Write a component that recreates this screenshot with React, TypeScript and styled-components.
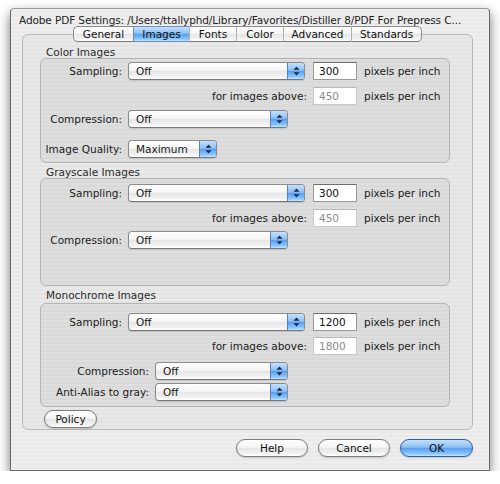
import styled, { createGlobalStyle, css } from "styled-components"

const GlobalStyle = createGlobalStyle`
  html, body {
    margin: 0;
    padding: 0;
    background: #ffffff;
  }
  body {
    font-family: "DejaVu Sans", "Liberation Sans", sans-serif;
    font-size: 10.5px;
    color: #1a1a1a;
  }
`

const pinstripe = css`
  background: repeating-linear-gradient(
    to bottom,
    #efefef 0px,
    #efefef 2px,
    #e9e9e9 2px,
    #e9e9e9 4px
  );
`

const glossWhite = css`
  background: linear-gradient(
    to bottom,
    #ffffff 0%,
    #f6f6f6 45%,
    #e6e6e6 52%,
    #f0f0f0 80%,
    #ffffff 100%
  );
`

const glossBlue = css`
  background: linear-gradient(
    to bottom,
    #c4e1ff 0%,
    #8cc0f5 45%,
    #5a9fec 52%,
    #86c5ff 85%,
    #c2e6ff 100%
  );
`

export const Window = styled.div`
  box-sizing: border-box;
  width: 480px;
  height: 463px;
  margin: 8px 0 0 10px;
  border: 1px solid #6a6a6a;
  border-top-color: #9a9a9a;
  border-radius: 4px 4px 0 0;
  box-shadow: 0 5px 12px rgba(0, 0, 0, 0.55);
  ${pinstripe}
  display: flex;
  flex-direction: column;
`

export const TitleBar = styled.div`
  height: 17px;
  padding: 0 8px;
  display: flex;
  align-items: flex-end;
  font-size: 10.5px;
  color: #222;
  white-space: nowrap;
  overflow: hidden;
  letter-spacing: -0.1px;
`

export const TabStrip = styled.div`
  position: relative;
  z-index: 1;
  display: flex;
  justify-content: center;
  margin: 0 0 -8px 11px;
  width: 451px;
`

export const Tab = styled.div<{ $w: number; $active?: boolean; $first?: boolean; $last?: boolean }>`
  box-sizing: border-box;
  width: ${(p) => p.$w}px;
  height: 16px;
  display: flex;
  align-items: center;
  justify-content: center;
  border-top: 1px solid #8a8a8a;
  border-bottom: 1px solid #7a7a7a;
  border-left: 1px solid ${(p) => (p.$first ? "#8a8a8a" : "#b0b0b0")};
  ${(p) => p.$last && "border-right: 1px solid #8a8a8a;"}
  border-radius: ${(p) => (p.$first ? "5px 0 0 5px" : p.$last ? "0 5px 5px 0" : "0")};
  ${(p) => (p.$active ? glossBlue : glossWhite)}
  ${(p) => p.$active && "border-color: #6c8fbf;"}
  color: #111;
`

export const Panel = styled.div`
  box-sizing: border-box;
  width: 451px;
  height: 396px;
  margin-left: 11px;
  padding-top: 11px;
  border: 1px solid #b9b9b9;
  border-radius: 6px;
  background: repeating-linear-gradient(
    to bottom,
    #e9e9e9 0px,
    #e9e9e9 2px,
    #e3e3e3 2px,
    #e3e3e3 4px
  );
  display: flex;
  flex-direction: column;
`

export const GroupLabel = styled.div<{ $mt?: number }>`
  height: 12px;
  line-height: 12px;
  margin: ${(p) => p.$mt ?? 0}px 0 0 23px;
  color: #2a2a2a;
`

export const GroupBox = styled.div<{ $h: number; $mt?: number }>`
  box-sizing: border-box;
  width: 410px;
  height: ${(p) => p.$h}px;
  margin: ${(p) => p.$mt ?? 0}px 0 0 17px;
  border: 1px solid #b4b4b4;
  border-radius: 6px;
  background: repeating-linear-gradient(
    to bottom,
    #dedede 0px,
    #dedede 2px,
    #d9d9d9 2px,
    #d9d9d9 4px
  );
  display: flex;
  flex-direction: column;
`

export const Row = styled.div<{ $mt: number }>`
  display: flex;
  align-items: center;
  height: 18px;
  margin-top: ${(p) => p.$mt}px;
`

export const Label = styled.div<{ $w: number }>`
  width: ${(p) => p.$w}px;
  margin-right: 6px;
  text-align: right;
  white-space: nowrap;
`

export const Popup = styled.div<{ $w: number }>`
  box-sizing: border-box;
  width: ${(p) => p.$w}px;
  height: 18px;
  display: flex;
  align-items: stretch;
  border: 1px solid #8b8b8b;
  border-bottom-color: #777;
  border-radius: 4px;
  ${glossWhite}
  overflow: hidden;
  box-shadow: 0 1px 1px rgba(0, 0, 0, 0.12);
`

export const PopupText = styled.div`
  flex: 1;
  display: flex;
  align-items: center;
  padding-left: 7px;
`

export const PopupArrows = styled.div`
  width: 16px;
  border-left: 1px solid #5b80b5;
  ${glossBlue}
  display: flex;
  align-items: center;
  justify-content: center;
`

export const Field = styled.div<{ $disabled?: boolean }>`
  box-sizing: border-box;
  width: 44px;
  height: 18px;
  margin-left: 8px;
  padding-left: 5px;
  display: flex;
  align-items: center;
  background: #fff;
  border: 1px solid ${(p) => (p.$disabled ? "#c8c8c8" : "#9a9a9a")};
  border-top-color: ${(p) => (p.$disabled ? "#b8b8b8" : "#6e6e6e")};
  color: ${(p) => (p.$disabled ? "#8a8a8a" : "#111")};
`

export const FieldFromLabel = styled(Field)`
  margin-left: 0;
`

export const Unit = styled.div`
  margin-left: 7px;
  white-space: nowrap;
`

export const PushButton = styled.div<{ $w: number; $default?: boolean }>`
  box-sizing: border-box;
  width: ${(p) => p.$w}px;
  height: 18px;
  border-radius: 9px;
  display: flex;
  align-items: center;
  justify-content: center;
  border: 1px solid ${(p) => (p.$default ? "#2f5e9e" : "#7d7d7d")};
  ${(p) => (p.$default ? glossBlue : glossWhite)}
  box-shadow: 0 1px 2px rgba(0, 0, 0, 0.2);
  color: #111;
`

export const PolicyButton = styled(PushButton)`
  margin: 3px 0 0 21px;
`

export const ButtonBar = styled.div`
  display: flex;
  justify-content: flex-end;
  gap: 10px;
  margin-top: 9px;
  padding-right: 16px;
`

function Arrows() {
  return (
    <svg width="7" height="10" viewBox="0 0 7 10">
      <path d="M3.5 0.5 L6.5 3.8 L0.5 3.8 Z" fill="#1b2a48" />
      <path d="M3.5 9.5 L6.5 6.2 L0.5 6.2 Z" fill="#1b2a48" />
    </svg>
  )
}

function PopupButton({ w, value }: { w: number; value: string }) {
  return (
    <Popup $w={w}>
      <PopupText>{value}</PopupText>
      <PopupArrows>
        <Arrows />
      </PopupArrows>
    </Popup>
  )
}

const tabs = [
  { name: "General", w: 60 },
  { name: "Images", w: 56 },
  { name: "Fonts", w: 47 },
  { name: "Color", w: 47 },
  { name: "Advanced", w: 68 },
  { name: "Standards", w: 71 },
]

function SamplingRows({ ppi, above, mt }: { ppi: string; above: string; mt: [number, number] }) {
  return (
    <>
      <Row $mt={mt[0]}>
        <Label $w={81}>Sampling:</Label>
        <PopupButton w={177} value="Off" />
        <Field>{ppi}</Field>
        <Unit>pixels per inch</Unit>
      </Row>
      <Row $mt={mt[1]}>
        <Label $w={266}>for images above:</Label>
        <FieldFromLabel $disabled>{above}</FieldFromLabel>
        <Unit>pixels per inch</Unit>
      </Row>
    </>
  )
}

export default function App() {
  return (
    <>
      <GlobalStyle />
      <Window>
        <TitleBar>
          Adobe PDF Settings: /Users/ttallyphd/Library/Favorites/Distiller 8/PDF For Prepress C...
        </TitleBar>
        <TabStrip>
          {tabs.map((t, i) => (
            <Tab
              key={t.name}
              $w={t.w}
              $active={t.name === "Images"}
              $first={i === 0}
              $last={i === tabs.length - 1}
            >
              {t.name}
            </Tab>
          ))}
        </TabStrip>
        <Panel>
          <GroupLabel>Color Images</GroupLabel>
          <GroupBox $h={105}>
            <SamplingRows ppi="300" above="450" mt={[3, 7]} />
            <Row $mt={5}>
              <Label $w={81}>Compression:</Label>
              <PopupButton w={160} value="Off" />
            </Row>
            <Row $mt={12}>
              <Label $w={81}>Image Quality:</Label>
              <PopupButton w={89} value="Maximum" />
            </Row>
          </GroupBox>

          <GroupLabel $mt={3}>Grayscale Images</GroupLabel>
          <GroupBox $h={108}>
            <SamplingRows ppi="300" above="450" mt={[5, 7]} />
            <Row $mt={4}>
              <Label $w={81}>Compression:</Label>
              <PopupButton w={160} value="Off" />
            </Row>
          </GroupBox>

          <GroupLabel $mt={3}>Monochrome Images</GroupLabel>
          <GroupBox $h={104} $mt={2}>
            <SamplingRows ppi="1200" above="1800" mt={[9, 6]} />
            <Row $mt={7}>
              <Label $w={108}>Compression:</Label>
              <PopupButton w={133} value="Off" />
            </Row>
            <Row $mt={3}>
              <Label $w={108}>Anti-Alias to gray:</Label>
              <PopupButton w={133} value="Off" />
            </Row>
          </GroupBox>

          <PolicyButton $w={53}>Policy</PolicyButton>
        </Panel>
        <ButtonBar>
          <PushButton $w={72}>Help</PushButton>
          <PushButton $w={72}>Cancel</PushButton>
          <PushButton $w={73} $default>
            OK
          </PushButton>
        </ButtonBar>
      </Window>
    </>
  )
}
